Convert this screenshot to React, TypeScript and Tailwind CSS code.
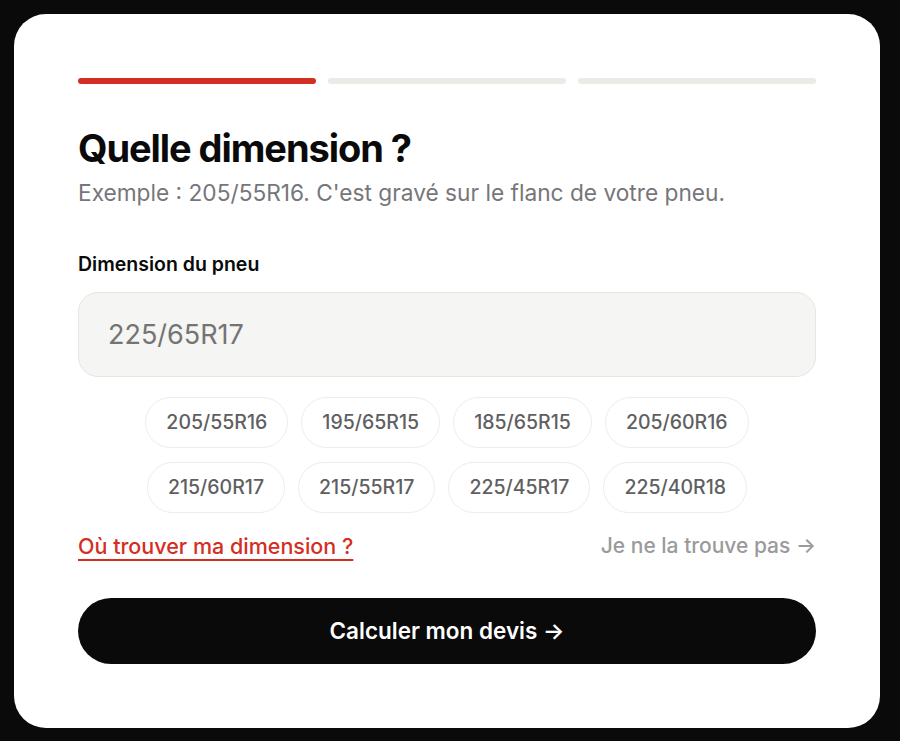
import { useState } from 'react'

const sizes = [
  '205/55R16',
  '195/65R15',
  '185/65R15',
  '205/60R16',
  '215/60R17',
  '215/55R17',
  '225/45R17',
  '225/40R18',
]

export default function App() {
  const [value, setValue] = useState('')

  return (
    <div className="min-h-screen bg-[#0a0a0a] p-[14px] pr-[20px] font-['Inter',sans-serif]">
      <div className="rounded-[32px] bg-white px-16 py-16">
        {/* progress */}
        <div className="flex gap-3">
          <div className="h-[6px] flex-1 rounded-full bg-[#d42e24]" />
          <div className="h-[6px] flex-1 rounded-full bg-[#ebebe6]" />
          <div className="h-[6px] flex-1 rounded-full bg-[#ebebe6]" />
        </div>

        <h1 className="mt-[42px] text-[38px] leading-[44px] font-bold tracking-[-0.028em] text-[#0a0a0a]">
          Quelle dimension ?
        </h1>
        <p className="mt-[8px] text-[22.7px] leading-[30px] text-[#76767a]">
          Exemple : 205/55R16. C'est gravé sur le flanc de votre pneu.
        </p>

        <label className="mt-[42px] block text-[19.5px] leading-[28px] font-semibold text-[#0a0a0a]">
          Dimension du pneu
        </label>
        <input
          value={value}
          onChange={(e) => setValue(e.target.value)}
          placeholder="225/65R17"
          className="mt-[14px] h-[85px] w-full rounded-[20px] border border-[#e6e6e1] bg-[#f5f5f3] px-[29px] text-[27px] text-[#222] outline-none placeholder:text-[#747474]"
        />

        <div className="mx-auto mt-[20px] flex max-w-[640px] flex-wrap justify-center gap-x-[13px] gap-y-[14px]">
          {sizes.map((s) => (
            <button
              key={s}
              type="button"
              onClick={() => setValue(s)}
              className="h-[51px] rounded-full border border-[#ececea] bg-white px-[20px] text-[19.5px] font-medium text-[#5f5f62]"
            >
              {s}
            </button>
          ))}
        </div>

        <div className="mt-[18px] flex h-[30px] items-center justify-between">
          <a
            href="#"
            className="text-[21.5px] font-medium text-[#d42e24] underline decoration-[2px] underline-offset-[5px]"
          >
            Où trouver ma dimension ?
          </a>
          <a href="#" className="text-[21px] font-medium text-[#9a9a9c]">
            Je ne la trouve pas →
          </a>
        </div>

        <button
          type="button"
          className="mt-[37px] h-[66px] w-full rounded-full bg-[#0a0a0a] text-[22.5px] font-semibold text-white"
        >
          Calculer mon devis →
        </button>
      </div>
    </div>
  )
}
